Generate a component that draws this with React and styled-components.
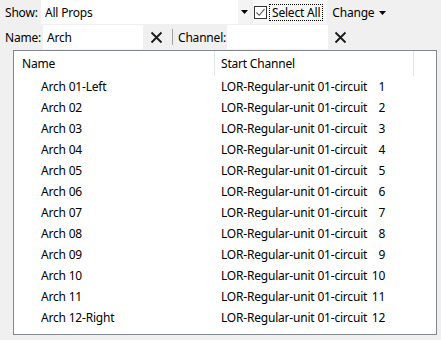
import { createGlobalStyle, styled } from "styled-components";

const GlobalStyle = createGlobalStyle`
  html, body {
    margin: 0;
    padding: 0;
    background: #f0f0f0;
  }
  body {
    font-family: "Noto Sans", "Open Sans", sans-serif;
    font-size: 12px;
    letter-spacing: -0.2px;
    color: #000;
  }
`;

const props = [
  "Arch 01-Left",
  "Arch 02",
  "Arch 03",
  "Arch 04",
  "Arch 05",
  "Arch 06",
  "Arch 07",
  "Arch 08",
  "Arch 09",
  "Arch 10",
  "Arch 11",
  "Arch 12-Right",
];

const DownArrow = () => (
  <svg width="7" height="4" viewBox="0 0 7 4">
    <path d="M0 0 H7 L3.5 4 Z" fill="#000" />
  </svg>
);

const ClearIcon = () => (
  <svg width="13" height="13" viewBox="0 0 13 13">
    <path d="M1.5 1.5 L11.5 11.5 M11.5 1.5 L1.5 11.5" stroke="#1a1a1a" strokeWidth="1.8" />
  </svg>
);

const App = () => {
  return (
    <>
      <GlobalStyle />
      <Page>
        {/* filtro superior */}
        <TopRow>
          <Label $width={36}>Show:</Label>
          <Combo>
            <ComboText>All Props</ComboText>
            <ComboButton>
              <DownArrow />
            </ComboButton>
          </Combo>
          <CheckButton>
            <CheckBox>
              <svg width="11" height="11" viewBox="0 0 11 11">
                <path d="M1.5 5.5 L4.2 8.3 L9.5 2.2" stroke="#555" strokeWidth="1.1" fill="none" />
              </svg>
            </CheckBox>
            <FocusText>Select All</FocusText>
          </CheckButton>
          <MenuButton>
            Change
            <DownArrow />
          </MenuButton>
        </TopRow>

        <SearchRow>
          <Label $width={38}>Name:</Label>
          <SearchBox $width={100}>Arch</SearchBox>
          <ClearButton $width={26}>
            <ClearIcon />
          </ClearButton>
          <Separator />
          <Label $width={49}>Channel:</Label>
          <SearchBox $width={101} />
          <ClearButton $width={24}>
            <ClearIcon />
          </ClearButton>
        </SearchRow>

        {/* lista */}
        <ListBox>
          <Header>
            <HeaderCell $width={201} $pad={8}>Name</HeaderCell>
            <HeaderCell $width={199} $pad={6}>Start Channel</HeaderCell>
            <HeaderRest />
          </Header>
          {props.map((name, i) => (
            <Row key={name}>
              <NameCell>{name}</NameCell>
              <ChannelCell>
                LOR-Regular-unit 01-circuit
                <Num>{i + 1}</Num>
              </ChannelCell>
            </Row>
          ))}
        </ListBox>
      </Page>
    </>
  );
};
export default App;

const Page = styled.div`
  width: 441px;
  height: 340px;
  display: flex;
  flex-direction: column;
  overflow: hidden;
`;

// barra superior
const TopRow = styled.div`
  height: 25px;
  display: flex;
  align-items: center;
`;
const Label = styled.div`
  padding-left: 5px;
  width: ${(p) => p.$width}px;
  white-space: nowrap;
`;
const Combo = styled.div`
  height: 24px;
  width: 209px;
  display: flex;
  align-self: flex-start;
`;
const ComboText = styled.div`
  flex: 1;
  background: #fff;
  display: flex;
  align-items: center;
  padding-left: 4px;
`;
const ComboButton = styled.div`
  width: 12px;
  display: flex;
  align-items: center;
  justify-content: center;
  background: #f4f4f4;
`;
const CheckButton = styled.div`
  margin-left: 3px;
  height: 24px;
  align-self: flex-start;
  display: flex;
  align-items: center;
  gap: 3px;
  padding: 0 5px 0 1px;
  background: #f7f7f7;
`;
const CheckBox = styled.div`
  width: 11px;
  height: 11px;
  border: 1px solid #333;
  background: #fff;
  display: flex;
`;
const FocusText = styled.div`
  outline: 1px dotted #000;
  outline-offset: 0;
  padding: 0 2px;
  line-height: 15px;
`;
const MenuButton = styled.div`
  margin-left: 5px;
  display: flex;
  align-items: center;
  gap: 5px;
`;

// buscadores
const SearchRow = styled.div`
  height: 24px;
  display: flex;
  align-items: center;
`;
const SearchBox = styled.div`
  width: ${(p) => p.$width}px;
  height: 24px;
  background: #fff;
  padding-left: 4px;
  box-sizing: border-box;
  display: flex;
  align-items: center;
`;
const ClearButton = styled.div`
  width: ${(p) => p.$width}px;
  display: flex;
  align-items: center;
  justify-content: center;
`;
const Separator = styled.div`
  width: 1px;
  height: 16px;
  background: #a0a0a0;
  margin-left: 3px;
`;

// lista
const ListBox = styled.div`
  margin: 1px 4px 0 13px;
  height: 285px;
  border: 1px solid #828790;
  background: #fff;
  box-sizing: border-box;
`;
const Header = styled.div`
  height: 25px;
  display: flex;
`;
const HeaderCell = styled.div`
  width: ${(p) => p.$width}px;
  padding-left: ${(p) => p.$pad}px;
  box-sizing: border-box;
  border-right: 1px solid #e5e5e5;
  display: flex;
  align-items: center;
`;
const HeaderRest = styled.div`
  flex: 1;
`;
const Row = styled.div`
  height: 21px;
  display: flex;
  align-items: center;
`;
const NameCell = styled.div`
  width: 201px;
  padding-left: 27px;
  box-sizing: border-box;
`;
const ChannelCell = styled.div`
  padding-left: 6px;
  display: flex;
  white-space: nowrap;
`;
const Num = styled.span`
  width: 18px;
  text-align: right;
`;
